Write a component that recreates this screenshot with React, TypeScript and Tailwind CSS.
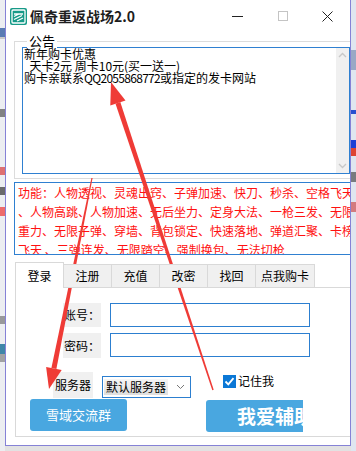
import React from "react";

const cjk = { fontFamily: '"Noto Sans CJK SC", "Noto Sans", sans-serif' };

const features = [
  "功能：人物透视、灵魂出窍、子弹加速、快刀、秒杀、空格飞天",
  "、人物高跳、人物加速、无后坐力、定身大法、一枪三发、无限",
  "重力、无限子弹、穿墙、背包锁定、快速落地、弹道汇聚、卡榜",
  "飞天 、三弹连发、无限踏空、强制换包、无法切枪",
];

const tabs = ["登录", "注册", "充值", "改密", "找回", "点我购卡"];
const tabWidths = ["w-[49px]", "w-[48px]", "w-[48px]", "w-[48px]", "w-[48px]", "w-[59px]"];

function AppIcon() {
  return (
    <svg width="17" height="17" viewBox="0 0 17 17">
      <rect x="0" y="0" width="17" height="17" rx="2" fill="#179a88" />
      <rect x="2" y="2" width="13" height="13" rx="1" fill="none" stroke="#fff" strokeWidth="1.3" />
      <path d="M4 6h9M4 8.5l5-2.5M4 11.5l8-4M7 13l6-3" stroke="#fff" strokeWidth="1.3" fill="none" />
    </svg>
  );
}

function Arrows() {
  return (
    <svg className="absolute inset-0 pointer-events-none" width="356" height="451" viewBox="0 0 356 451">
      {/* right arrow, head at top */}
      <polygon points="213.7,389.8 212.3,390.2 115.5,103.7 120.3,102.1" fill="#ef3b36" />
      <polygon points="111,82 125.5,100.4 110.3,105.4" fill="#ef3b36" />
      {/* left arrow, head at bottom */}
      <polygon points="92.6,178.1 91.4,177.9 51.4,367.9 56.4,368.9" fill="#ef3b36" />
      <polygon points="49,389 61.7,370 46.1,366.9" fill="#ef3b36" />
    </svg>
  );
}

export default function App() {
  return (
    <div className="relative w-[356px] h-[451px] overflow-hidden bg-[#e2e2e2] flex" style={cjk}>
      {/* window behind, left */}
      <div className="w-[5px] flex flex-col bg-[#eceef1]">
        <div className="h-[28px]" />
        <div className="h-[9px] bg-[#5a7cb4]" />
        <div className="h-[2px] bg-[#c9c9c9]" />
        <div className="h-[70px]" />
        <div className="h-[8px] bg-[#3b3b3b] opacity-60" />
        <div className="h-[50px]" />
        <div className="h-[8px] bg-[#d93a3a] opacity-70" />
        <div className="h-[12px]" />
        <div className="h-[8px] bg-[#333] opacity-70" />
        <div className="h-[12px]" />
        <div className="h-[9px] bg-[#e33] opacity-70" />
        <div className="h-[100px]" />
        <div className="h-[8px] bg-[#444] opacity-50" />
        <div className="h-[20px]" />
        <div className="h-[10px] bg-[#3f86a8]" />
        <div className="h-[8px] bg-[#555] opacity-50" />
      </div>

      {/* main window */}
      <div className="w-[346px] h-[446px] bg-white border-x border-b border-[#8582d6] flex flex-col overflow-hidden">
        {/* title bar */}
        <div className="h-[32px] flex items-center shrink-0">
          <div className="ml-[4px]">
            <AppIcon />
          </div>
          <span className="ml-[3px] text-[14px] font-bold text-[#1d1d1d] whitespace-nowrap">佩奇重返战场2.0</span>
          <div className="ml-auto flex h-full">
            <div className="w-[45px] flex items-center justify-center">
              <div className="w-[11px] h-px bg-[#222]" />
            </div>
            <div className="w-[45px] flex items-center justify-center">
              <div className="w-[10px] h-[10px] border border-[#c4c4c4]" />
            </div>
            <div className="w-[45px] flex items-center justify-center">
              <svg width="11" height="11" viewBox="0 0 11 11">
                <path d="M0.5 0.5l10 10M10.5 0.5l-10 10" stroke="#222" strokeWidth="1" />
              </svg>
            </div>
          </div>
        </div>

        <div className="pl-[8px] flex flex-col">
          {/* 公告 group */}
          <div className="relative mt-[9px] w-[342px] h-[138px] border border-[#dcdcdc] shrink-0">
            <span className="absolute -top-[8px] left-[12px] bg-white px-[2px] text-[13px] leading-[14px] text-black">公告</span>
            <div className="mt-[5px] ml-[7px] w-[328px] h-[127px] border border-[#2f80d1] flex">
              <div className="flex-1 pl-px text-[12px] leading-[12px] text-black whitespace-pre">
                <div>新年购卡优惠</div>
                <div>{"  天卡2元 周卡10元(买一送一)"}</div>
                <div>
                  购卡亲联系<span className="tracking-[-0.7px]">QQ2055868772</span>或指定的发卡网站
                </div>
              </div>
              <div className="w-[13px] bg-[#f0f0f0] flex flex-col items-center justify-between py-[4px]">
                <svg width="9" height="6" viewBox="0 0 9 6">
                  <path d="M1 5l3.5-3.5L8 5" stroke="#c8c8c8" strokeWidth="1.4" fill="none" />
                </svg>
                <svg width="9" height="6" viewBox="0 0 9 6">
                  <path d="M1 1l3.5 3.5L8 1" stroke="#c8c8c8" strokeWidth="1.4" fill="none" />
                </svg>
              </div>
            </div>
          </div>

          {/* features */}
          <div className="mt-[3px] w-[342px] h-[73px] border border-[#2f80d1] pl-[3px] text-[12px] leading-[19px] text-[#ff1010] whitespace-nowrap overflow-hidden shrink-0">
            {features.map((f) => (
              <div key={f}>{f}</div>
            ))}
          </div>

          {/* tabs */}
          <div className="mt-[7px] ml-px flex items-end relative z-10">
            {tabs.map((t, i) => (
              <div
                key={t}
                className={
                  i === 0
                    ? `${tabWidths[i]} h-[26px] bg-white border border-b-0 border-[#d9d9d9] flex items-center justify-center text-[12px] text-black`
                    : `${tabWidths[i]} h-[24px] bg-[#f0f0f0] border border-l-0 border-[#d9d9d9] flex items-center justify-center text-[12px] text-black`
                }
              >
                {t}
              </div>
            ))}
          </div>
          <div className="ml-px -mt-px w-[340px] h-[150px] border border-[#d9d9d9] pt-[15px] flex flex-col shrink-0">
            <div className="flex pl-[47px]">
              <div className="w-[38px] h-[24px] bg-[#f0f0f0] flex items-center justify-center text-[12px] text-black">账号：</div>
              <div className="ml-[9px] w-[200px] h-[24px] border border-[#2c7fd0] bg-white" />
            </div>
            <div className="flex pl-[47px] mt-[6px]">
              <div className="w-[38px] h-[25px] bg-[#f0f0f0] flex items-center justify-center text-[12px] text-black">密码：</div>
              <div className="ml-[9px] w-[200px] h-[24px] border border-[#2c7fd0] bg-white" />
            </div>
            <div className="flex items-end pl-[37px] mt-[14px]">
              <div className="w-[40px] h-[26px] bg-[#f0f0f0] flex items-center justify-center text-[12px] text-black">服务器</div>
              <div className="ml-[9px] w-[89px] h-[22px] border border-[#2c7fd0] flex items-center">
                <span className="ml-px h-[16px] px-[2px] bg-gradient-to-b from-[#f6f6f6] to-[#dedede] text-[12px] leading-[16px] text-black">默认服务器</span>
                <svg className="ml-[8px]" width="9" height="6" viewBox="0 0 9 6">
                  <path d="M1 1l3.5 3.5L8 1" stroke="#777" strokeWidth="1" fill="none" />
                </svg>
              </div>
              <div className="ml-[32px] self-start mt-[2px] flex items-center">
                <div className="w-[13px] h-[13px] bg-[#0b78d6] flex items-center justify-center">
                  <svg width="11" height="11" viewBox="0 0 11 11">
                    <path d="M1.5 5.5l2.8 2.8L9.5 2.2" stroke="#fff" strokeWidth="1.8" fill="none" />
                  </svg>
                </div>
                <span className="ml-[2px] text-[12px] leading-[14px] text-black">记住我</span>
              </div>
            </div>
            <div className="flex items-start mt-px">
              <div className="ml-[14px] w-[97px] h-[32px] rounded-[3px] bg-[#49a7e0] flex items-center justify-center text-[13px] text-white">雪域交流群</div>
              <div className="ml-[79px] mt-px w-[97px] h-[32px] rounded-l-[3px] bg-[#49a7e0] overflow-hidden flex items-center pl-[31px] text-[19px] font-bold text-white whitespace-nowrap">我爱辅助</div>
            </div>
          </div>
        </div>
      </div>

      {/* window behind, right */}
      <div className="w-[5px] flex flex-col bg-[#dfe6f0]">
        <div className="h-[50px]" />
        <div className="h-[20px] bg-[#6b7fa8] opacity-60" />
        <div className="h-[40px]" />
        <div className="h-[4px] bg-[#2a4fcf]" />
        <div className="h-[26px]" />
        <div className="h-[8px] bg-[#1d3fd6]" />
        <div className="h-[8px] bg-[#d43]" />
        <div className="h-[16px]" />
        <div className="h-[10px] bg-[#333] opacity-60" />
        <div className="h-[20px]" />
        <div className="h-[10px] bg-[#c33] opacity-60" />
      </div>

      <Arrows />
    </div>
  );
}
